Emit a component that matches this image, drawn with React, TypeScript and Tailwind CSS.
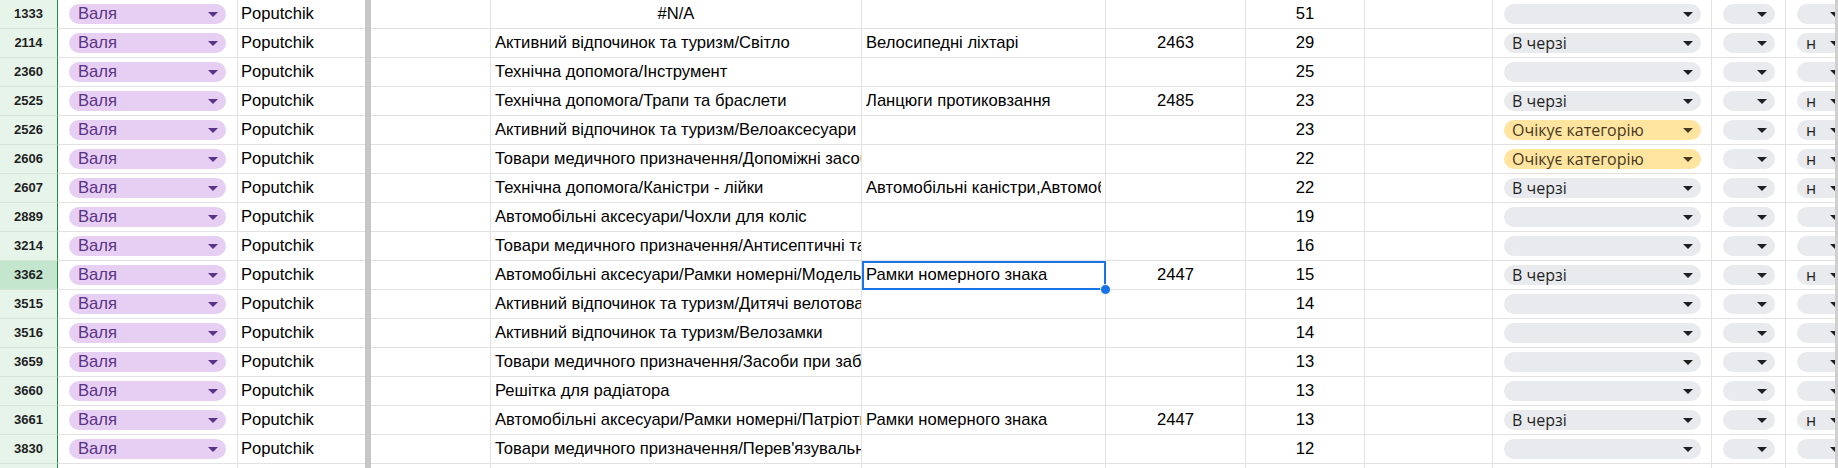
import React from "react";

type Row = {
  n: string;
  e: string;
  eCenter?: boolean;
  f?: string;
  g?: string;
  h: string;
  j?: string;
  l?: string;
  sel?: boolean;
};

const rows: Row[] = [
  { n: "1333", e: "#N/A", eCenter: true, h: "51" },
  { n: "2114", e: "Активний відпочинок та туризм/Світло", f: "Велосипедні ліхтарі", g: "2463", h: "29", j: "В черзі", l: "н" },
  { n: "2360", e: "Технічна допомога/Інструмент", h: "25" },
  { n: "2525", e: "Технічна допомога/Трапи та браслети", f: "Ланцюги протиковзання", g: "2485", h: "23", j: "В черзі", l: "н" },
  { n: "2526", e: "Активний відпочинок та туризм/Велоаксесуари", h: "23", j: "Очікує категорію", l: "н" },
  { n: "2606", e: "Товари медичного призначення/Допоміжні засоби", h: "22", j: "Очікує категорію", l: "н" },
  { n: "2607", e: "Технічна допомога/Каністри - лійки", f: "Автомобільні каністри,Автомобільні лійки", h: "22", j: "В черзі", l: "н" },
  { n: "2889", e: "Автомобільні аксесуари/Чохли для коліс", h: "19" },
  { n: "3214", e: "Товари медичного призначення/Антисептичні та дезінфікуючі засоби", h: "16" },
  { n: "3362", e: "Автомобільні аксесуари/Рамки номерні/Модельні", f: "Рамки номерного знака", g: "2447", h: "15", j: "В черзі", l: "н", sel: true },
  { n: "3515", e: "Активний відпочинок та туризм/Дитячі велотовари", h: "14" },
  { n: "3516", e: "Активний відпочинок та туризм/Велозамки", h: "14" },
  { n: "3659", e: "Товари медичного призначення/Засоби при забоях", h: "13" },
  { n: "3660", e: "Решітка для радіатора", h: "13" },
  { n: "3661", e: "Автомобільні аксесуари/Рамки номерні/Патріотичні", f: "Рамки номерного знака", g: "2447", h: "13", j: "В черзі", l: "н" },
  { n: "3830", e: "Товари медичного призначення/Перев'язувальні засоби", h: "12" },
];

const Tri = ({ color }: { color: string }) => (
  <svg width="10" height="5" viewBox="0 0 10 5" className="shrink-0">
    <path d="M0 0H10L5 5Z" fill={color} />
  </svg>
);

const cell = "h-[29px] shrink-0 border-b border-r border-[#e2e2e2] overflow-hidden";

function DataRow({ r, empty }: { r?: Row; empty?: boolean }) {
  const yellow = r?.j === "Очікує категорію";
  return (
    <div className="flex font-['Liberation_Sans',Arial,sans-serif] text-[16.6px] text-black">
      <div
        className={`h-[29px] w-[58px] shrink-0 border-b border-r border-b-[#d6e4da] border-r-[#1e8e3e] flex items-center justify-center text-[13px] font-bold text-[#1f1f1f] ${
          r?.sel ? "bg-[#c4e6cf]" : "bg-[#e6f4ea]"
        }`}
      >
        {r?.n}
      </div>
      <div className={`${cell} w-[180px] flex items-center pl-[11px] pr-[11px]`}>
        {!empty && (
          <div className="flex h-5 w-full items-center rounded-full bg-[#e6cff2] pl-[9px] pr-2 text-[#5a3286]">
            <span className="flex-1 leading-none">Валя</span>
            <Tri color="#5a3286" />
          </div>
        )}
      </div>
      <div className={`${cell} w-[127px] border-r-0 flex items-center px-[3px] whitespace-nowrap`}>
        {!empty && "Poputchik"}
      </div>
      <div className="h-[29px] w-[6px] shrink-0 bg-[#c7c7c7]" />
      <div className={`${cell} w-[120px]`} />
      <div
        className={`${cell} w-[371px] flex items-center px-[4px] whitespace-nowrap ${
          r?.eCenter ? "justify-center" : ""
        }`}
      >
        {r?.e}
      </div>
      <div className={`${cell} w-[244px] relative flex items-center px-[4px] whitespace-nowrap overflow-visible`}>
        <span className="overflow-hidden block w-full">{r?.f}</span>
        {r?.sel && (
          <>
            <div className="absolute left-0 top-0 -right-px -bottom-px border-2 border-[#1a73e8] z-10" />
            <div className="absolute -right-[6px] -bottom-[6px] w-[11px] h-[11px] rounded-full bg-[#1a73e8] border border-white z-20" />
          </>
        )}
      </div>
      <div className={`${cell} w-[140px] flex items-center justify-center`}>{r?.g}</div>
      <div className={`${cell} w-[119px] flex items-center justify-center`}>{r?.h}</div>
      <div className={`${cell} w-[128px]`} />
      <div className={`${cell} w-[219px] flex items-center pl-[11px] pr-[10px]`}>
        {!empty && (
          <div
            className={`flex h-5 w-full items-center rounded-full pl-2 pr-2 font-['Open_Sans',sans-serif] text-[16px] ${
              yellow ? "bg-[#ffe5a0] text-[#473821]" : "bg-[#e8eaed] text-[#1f1f1f]"
            }`}
          >
            <span className="flex-1 leading-none whitespace-nowrap">{r?.j}</span>
            <Tri color={yellow ? "#473821" : "#1f1f1f"} />
          </div>
        )}
      </div>
      <div className={`${cell} w-[74px] flex items-center pl-[11px] pr-[10px]`}>
        {!empty && (
          <div className="flex h-5 w-full items-center justify-end rounded-full bg-[#e8eaed] pr-2">
            <Tri color="#1f1f1f" />
          </div>
        )}
      </div>
      <div className={`${cell} w-[49px] border-r-0 flex items-center pl-[11px]`}>
        {!empty && (
          <div className="flex h-5 w-[51px] shrink-0 items-center rounded-full bg-[#e8eaed] pl-[9px] pr-2 font-['Open_Sans',sans-serif] text-[16px] text-[#1f1f1f]">
            <span className="flex-1 leading-none">{r?.l}</span>
            <Tri color="#1f1f1f" />
          </div>
        )}
      </div>
      <div className="h-[29px] w-[3px] shrink-0 bg-[#cfcfcf]" />
    </div>
  );
}

export default function App() {
  return (
    <div className="h-[468px] w-[1838px] overflow-hidden bg-white">
      {rows.map((r) => (
        <DataRow key={r.n} r={r} />
      ))}
      <DataRow empty />
    </div>
  );
}
